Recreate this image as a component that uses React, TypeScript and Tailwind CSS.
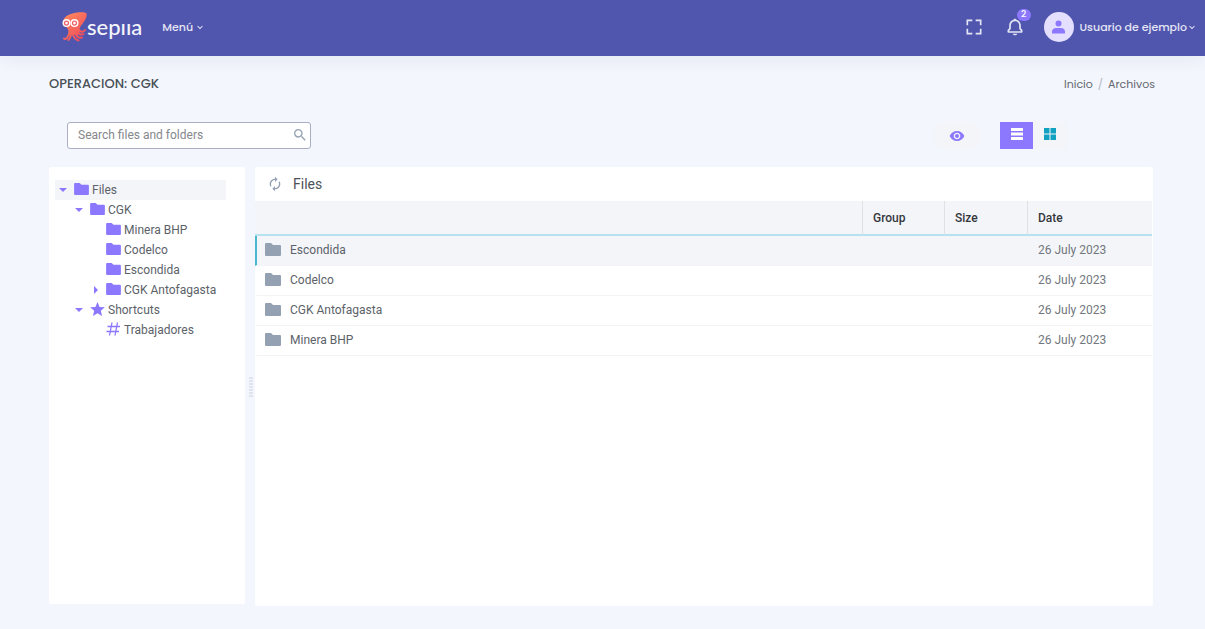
import React, { useState } from 'react';
import { BiBell, BiChevronDown, BiFullscreen } from 'react-icons/bi';
import { MdAutorenew, MdRemoveRedEye, MdSearch } from 'react-icons/md';

interface TreeItem {
  name: string;
  level: number;
  icon: 'folder' | 'star' | 'hash';
  arrow?: 'down' | 'right';
}

interface FileRow {
  name: string;
  date: string;
}

const treeItems: TreeItem[] = [
  { name: 'Files', level: 0, icon: 'folder', arrow: 'down' },
  { name: 'CGK', level: 1, icon: 'folder', arrow: 'down' },
  { name: 'Minera BHP', level: 2, icon: 'folder' },
  { name: 'Codelco', level: 2, icon: 'folder' },
  { name: 'Escondida', level: 2, icon: 'folder' },
  { name: 'CGK Antofagasta', level: 2, icon: 'folder', arrow: 'right' },
  { name: 'Shortcuts', level: 1, icon: 'star', arrow: 'down' },
  { name: 'Trabajadores', level: 2, icon: 'hash' },
];

const files: FileRow[] = [
  { name: 'Escondida', date: '26 July 2023' },
  { name: 'Codelco', date: '26 July 2023' },
  { name: 'CGK Antofagasta', date: '26 July 2023' },
  { name: 'Minera BHP', date: '26 July 2023' },
];

const indents = ['pl-1', 'pl-5', 'pl-9'];

const Logo: React.FC = () => (
  <a href="#" className="flex items-center text-[#f4f4fb]">
    <svg viewBox="0 0 50 60" className="h-[30px] w-[25px]" aria-hidden="true">
      <defs>
        <linearGradient id="squid" gradientUnits="userSpaceOnUse" x1="5" y1="5" x2="45" y2="50">
          <stop offset="0" stopColor="#ff8a5c" />
          <stop offset="1" stopColor="#f04a5c" />
        </linearGradient>
      </defs>
      <path
        d="M2 20C3 9 15 3 30 1C39 0 47 0 49 3C51 8 46 18 40 25C36 30 33 35 35 40L32 46C25 46 16 44 13 38C12 33 9 30 6 28Z"
        fill="url(#squid)"
      />
      <g fill="none" stroke="url(#squid)" strokeLinecap="round" strokeWidth="4">
        <path d="M14 32C17 41 14 46 11 50C9 54 6 55 4 53" />
        <path d="M18 38C19 46 17 51 13 56" />
        <path d="M21 40C22 48 25 55 33 57" />
        <path d="M26 40C28 48 33 53 40 51" />
        <path d="M31 38C33 44 38 47 43 44" />
        <path d="M33 34C36 40 42 42 46 36" />
      </g>
      <circle cx="9" cy="22" r="8" fill="#fff" />
      <circle cx="25" cy="22" r="8" fill="#fff" />
      <circle cx="9" cy="22" r="4" fill="none" stroke="#f0606a" strokeWidth="2.5" />
      <circle cx="25" cy="22" r="4" fill="none" stroke="#f0606a" strokeWidth="2.5" />
    </svg>
    <span className="font-['Lato','Open_Sans',sans-serif] text-[22px] leading-7">sepııa</span>
  </a>
);

const FolderIcon: React.FC<{ className: string }> = ({ className }) => (
  <svg viewBox="0 0 16 13" fill="currentColor" className={className} aria-hidden="true">
    <path d="M1 0h5l2 2h7a1 1 0 0 1 1 1v9a1 1 0 0 1-1 1H1a1 1 0 0 1-1-1V1a1 1 0 0 1 1-1z" />
  </svg>
);

const TreeIcon: React.FC<{ icon: TreeItem['icon'] }> = ({ icon }) => {
  if (icon === 'star') {
    return (
      <svg viewBox="2 2 20 19" fill="currentColor" className="h-[14px] w-[15px]" aria-hidden="true">
        <path d="M12 17.27L18.18 21l-1.64-7.03L22 9.24l-7.19-.62L12 2 9.19 8.62 2 9.24l5.45 4.73L5.82 21z" />
      </svg>
    );
  }
  if (icon === 'hash') {
    return (
      <svg viewBox="0 0 15 14" fill="none" stroke="currentColor" strokeWidth="1.3" className="h-[14px] w-[15px]" aria-hidden="true">
        <path d="M1.5 4.5H14M0.5 9.5H13M6 0.5L3.5 13.5M11.5 0.5L9 13.5" />
      </svg>
    );
  }
  return <FolderIcon className="h-3 w-[15px]" />;
};

const Header: React.FC = () => (
  <header className="flex h-14 items-center bg-[#5056ae] pr-2 pb-[2px] pl-[62px] font-['Poppins','Inter',sans-serif] text-[11px] font-medium text-[#e4e5f5] shadow-[0_4px_16px_rgba(18,38,63,0.06)]">
    <Logo />
    <button type="button" className="ml-5 flex items-center gap-px">
      Menú
      <BiChevronDown size={12} />
    </button>
    <div className="ml-auto flex items-center">
      <button type="button" aria-label="Pantalla completa">
        <BiFullscreen size={20} />
      </button>
      <button type="button" aria-label="Notificaciones" className="relative ml-[21px]">
        <BiBell size={20} />
        <span className="absolute -top-2 left-3 flex h-3 w-[14px] items-center justify-center rounded-full bg-[#8c78ff] text-[9px] text-white">
          2
        </span>
      </button>
      <button type="button" className="ml-[19px] flex items-center">
        <span className="flex size-[30px] items-center justify-center rounded-full bg-[#e4dfff]">
          <svg viewBox="0 0 13 14" fill="#8c78ff" className="h-[14px] w-[13px]" aria-hidden="true">
            <circle cx="6.5" cy="3.5" r="3" />
            <path d="M0 13.5v-2C0 9.500 1.800 8 4 8h5c2.200 0 4 1.500 4 3.500v2z" />
          </svg>
        </span>
        <span className="ml-[6px]">Usuario de ejemplo</span>
        <BiChevronDown size={12} className="-mx-px" />
      </button>
    </div>
  </header>
);

const Toolbar: React.FC = () => {
  const [search, setSearch] = useState<string>('');

  return (
    <div className="mt-7 flex h-[27px] items-center pr-[88px] pl-[18px]">
      <label className="flex h-full w-[244px] items-center rounded-[3px] border border-[#a9aec4] bg-white pr-[2px] pb-[2px] pl-[10px]">
        <input
          type="text"
          aria-label="Search files and folders"
          placeholder="Search files and folders"
          className="min-w-0 flex-1 bg-transparent text-xs text-gray-700 outline-none placeholder:text-[#85878c]"
          value={search}
          onChange={(e) => setSearch(e.target.value)}
        />
        <MdSearch size={16} className="text-[#94a1b3]" />
      </label>
      <button type="button" aria-label="Preview" className="ml-auto flex h-full w-12 items-center justify-center rounded-full bg-[#f4f5f9] text-[#8c78ff]">
        <MdRemoveRedEye size={16} />
      </button>
      <button type="button" aria-label="List" className="ml-[19px] flex h-full w-[33px] items-center justify-center bg-[#8c78ff] text-white">
        <svg viewBox="0 0 12 12" fill="currentColor" className="mb-[3px] size-3" aria-hidden="true">
          <path d="M0 0h12v3H0zM0 4.500h12v3H0zM0 9h12v3H0z" />
        </svg>
      </button>
      <button type="button" aria-label="Cards" className="flex h-full w-[34px] items-center justify-center bg-[#f4f5f9] text-[#12a1c0]">
        <svg viewBox="0 0 12 12" fill="currentColor" className="mb-[3px] size-3" aria-hidden="true">
          <path d="M0 0h5.500v5.500H0zM6.500 0H12v5.500H6.500zM0 6.500h5.500V12H0zM6.500 6.500H12V12H6.500z" />
        </svg>
      </button>
    </div>
  );
};

const FolderTree: React.FC = () => (
  <nav className="mb-[2px] w-[196px] shrink-0 rounded-[2px] bg-white pt-[13px] pr-[19px] pl-[6px]">
    <ul>
      {treeItems.map((item) => (
        <li key={item.name} className={item.level === 0 ? 'bg-[#f4f5f9]' : ''}>
          <a href="#" className={`flex h-5 items-center text-xs text-[#5c6269] ${indents[item.level]}`}>
            <span className="flex w-[15px] shrink-0 items-center text-[#8c78ff]">
              {item.arrow === 'down' && (
                <svg viewBox="0 0 8 4" fill="currentColor" className="h-1 w-2" aria-hidden="true">
                  <path d="M0 0h8L4 4z" />
                </svg>
              )}
              {item.arrow === 'right' && (
                <svg viewBox="0 0 4 8" fill="currentColor" className="ml-[3px] h-2 w-1" aria-hidden="true">
                  <path d="M0 0v8l4-4z" />
                </svg>
              )}
            </span>
            <span className="mb-[2px] text-[#8c78ff]">
              <TreeIcon icon={item.icon} />
            </span>
            <span className="ml-[3px] whitespace-nowrap">{item.name}</span>
          </a>
        </li>
      ))}
    </ul>
  </nav>
);

const FileList: React.FC = () => {
  const [selected] = useState<string>('Escondida');

  return (
    <section className="min-w-0 flex-1 rounded-[2px] bg-white pr-px">
      <div className="flex h-[34px] items-center pl-3">
        <button type="button" aria-label="Refresh" className="text-[#94a1b3]">
          <MdAutorenew size={16} />
        </button>
        <h2 className="ml-[10px] text-sm text-[#4c5258]">Files</h2>
      </div>
      <table className="w-full table-fixed border-separate border-spacing-0 text-left text-xs">
        <thead>
          <tr className="h-[35px] bg-[#f4f5f9] text-[#34383d]">
            <th className="border-b-2 border-b-[#b5e2ee]" aria-label="Name"></th>
            <th className="w-[82px] border-b-2 border-l border-b-[#b5e2ee] border-l-[#dfe1e6] pl-[10px] font-medium">Group</th>
            <th className="w-[83px] border-b-2 border-l border-b-[#b5e2ee] border-l-[#dfe1e6] pl-[10px] font-medium">Size</th>
            <th className="w-[125px] border-b-2 border-l border-b-[#b5e2ee] border-l-[#dfe1e6] pl-[10px] font-medium">Date</th>
          </tr>
        </thead>
        <tbody className="text-[#5c6269]">
          {files.map((file) => (
            <tr key={file.name} className={file.name === selected ? 'h-[30px] bg-[#f4f5f9]' : 'h-[30px]'}>
              <td
                className={`border-b border-l-2 border-b-[#f3f4f7] pb-px pl-2 ${
                  file.name === selected ? 'border-l-[#4bb8d1]' : 'border-l-transparent'
                }`}
              >
                <div className="flex items-center">
                  <FolderIcon className="mb-[2px] h-[13px] w-4 text-[#94a1b3]" />
                  <span className="ml-[9px]">{file.name}</span>
                </div>
              </td>
              <td className="border-b border-[#f3f4f7]"></td>
              <td className="border-b border-[#f3f4f7]"></td>
              <td className="border-b border-[#f3f4f7] pb-px pl-[11px] text-[#72777e]">{file.date}</td>
            </tr>
          ))}
        </tbody>
      </table>
    </section>
  );
};

const App: React.FC = () => {
  return (
    <div className="flex min-h-screen flex-col bg-[#f3f6fd] font-['Roboto',sans-serif]">
      <Header />
      <main className="flex flex-1 flex-col pt-[18px] pr-[50px] pb-[23px] pl-[49px]">
        <div className="flex h-5 items-center justify-between font-['Poppins','Inter',sans-serif]">
          <h1 className="text-[13px] font-medium text-[#495057]">OPERACION: CGK</h1>
          <nav className="flex gap-[5px] text-[11px]">
            <a href="#" className="text-[#62666c]">Inicio</a>
            <span className="text-[#b4b8c2]">/</span>
            <a href="#" className="text-[#62666c]">Archivos</a>
          </nav>
        </div>
        <Toolbar />
        <div className="mt-[18px] mr-[2px] flex flex-1">
          <FolderTree />
          <div className="flex w-[10px] shrink-0 items-center justify-end pr-[2px]">
            <div className="flex flex-col gap-px">
              {[...Array(7).keys()].map((n) => (
                <span key={n} className="h-[2px] w-1 bg-[#dfe4ee]" />
              ))}
            </div>
          </div>
          <FileList />
        </div>
      </main>
    </div>
  );
};

export default App;
